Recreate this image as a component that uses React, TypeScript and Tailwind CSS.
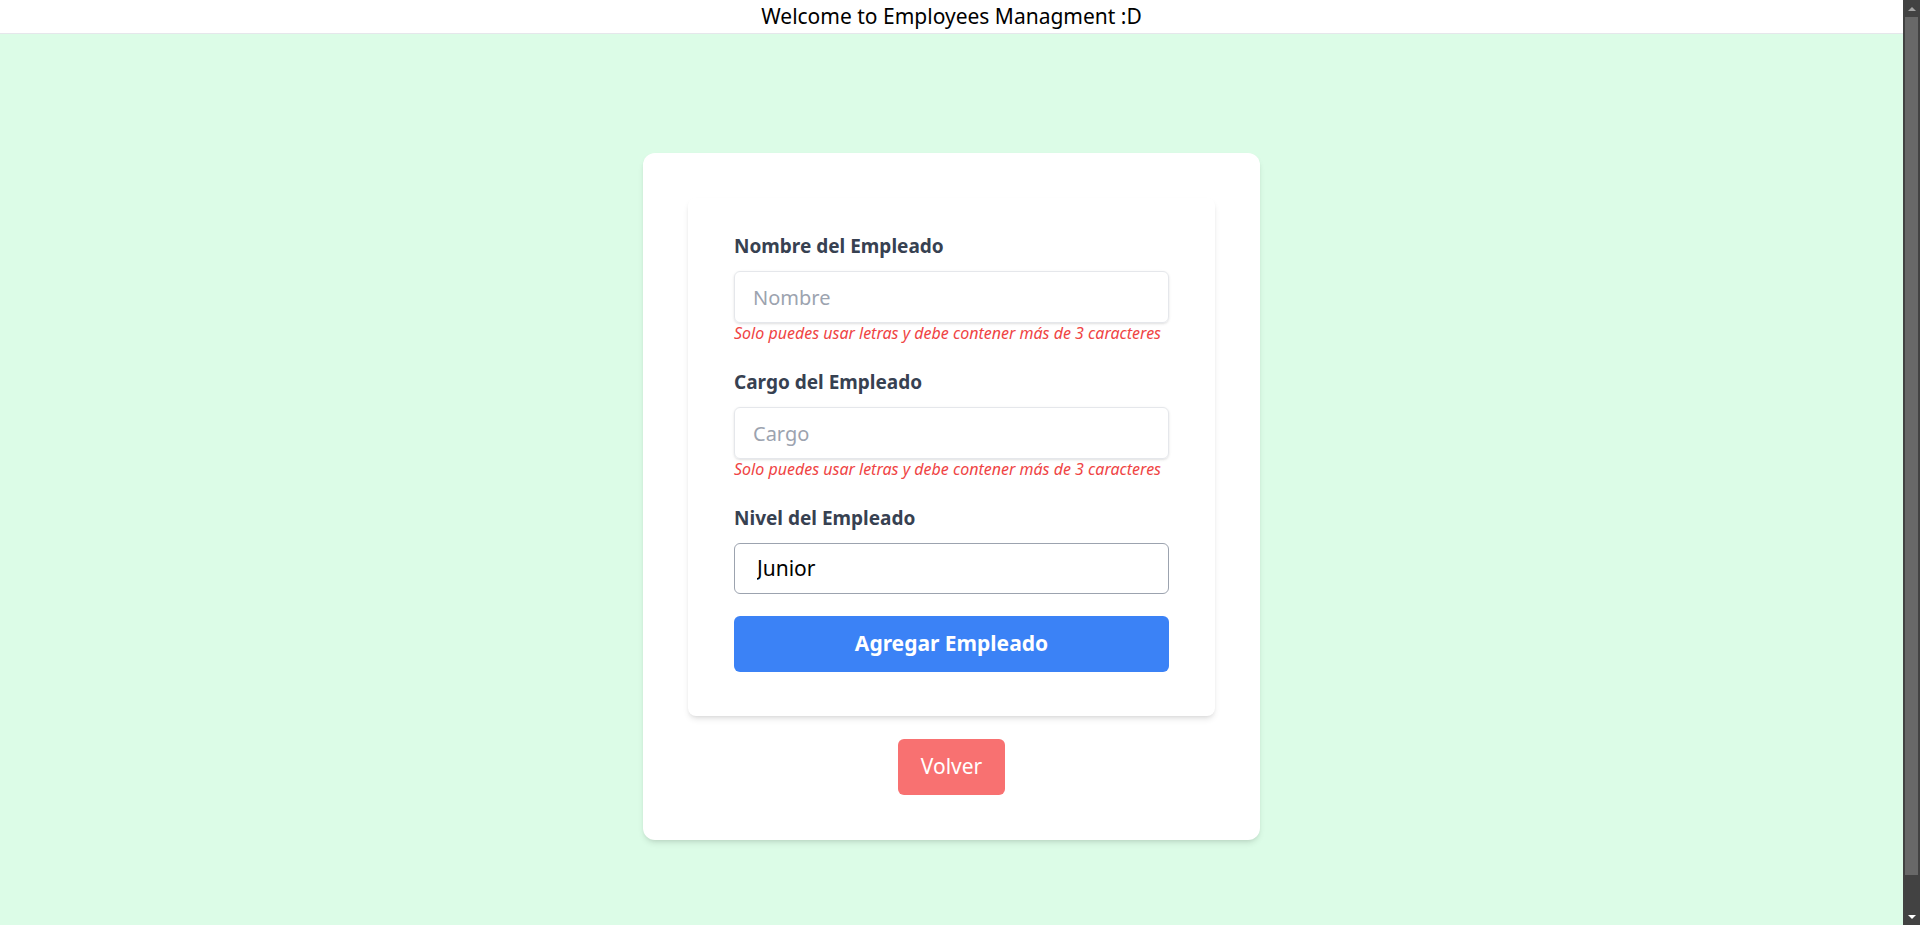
import { useState } from 'react';

const labelCls = 'mb-[12px] block text-[19px] leading-[25px] font-bold text-[#374151]';
const inputCls =
  'h-[52px] w-full rounded-md border border-[#e5e7eb] px-[18px] text-[20px] text-[#374151] shadow placeholder:text-[#9ca3af] focus:outline-none';
const errorCls = 'text-[16px] leading-[20px] text-[#ef4444] italic';

function ScrollBar() {
  return (
    <div className="flex h-screen w-[17px] shrink-0 flex-col bg-[#424242]">
      <div className="flex h-[17px] items-center justify-center">
        <div className="h-0 w-0 border-x-[4px] border-b-[4px] border-x-transparent border-b-[#a3a3a3]" />
      </div>
      <div className="mx-[2px] flex-1 bg-[#686868]" />
      <div className="h-[33px]" />
      <div className="flex h-[17px] items-center justify-center">
        <div className="h-0 w-0 border-x-[4px] border-t-[4px] border-x-transparent border-t-white" />
      </div>
    </div>
  );
}

export default function App() {
  const [nombre, setNombre] = useState('');
  const [cargo, setCargo] = useState('');
  const [nivel, setNivel] = useState('Junior');

  return (
    <div className="flex h-screen font-['Noto_Sans',sans-serif]">
      <div className="flex-1 overflow-y-auto">
        <header className="h-[34px] border-b border-[#e5e7eb] bg-white text-center text-[21px] leading-[33px] text-black">
          Welcome to Employees Managment :D
        </header>

        <main className="flex min-h-screen items-center justify-center bg-[#dcfce7]">
          <div className="w-[617px] rounded-xl bg-white p-[45px] shadow-md">
            <form
              className="rounded-lg bg-white px-[46px] pt-[36px] pb-[44px] shadow-md"
              onSubmit={(e) => e.preventDefault()}
            >
              <div className="mb-[27px]">
                <label className={labelCls}>Nombre del Empleado</label>
                <input
                  type="text"
                  value={nombre}
                  onChange={(e) => setNombre(e.target.value)}
                  placeholder="Nombre"
                  className={inputCls}
                />
                <p className={errorCls}>Solo puedes usar letras y debe contener más de 3 caracteres</p>
              </div>

              <div className="mb-[27px]">
                <label className={labelCls}>Cargo del Empleado</label>
                <input
                  type="text"
                  value={cargo}
                  onChange={(e) => setCargo(e.target.value)}
                  placeholder="Cargo"
                  className={inputCls}
                />
                <p className={errorCls}>Solo puedes usar letras y debe contener más de 3 caracteres</p>
              </div>

              <div className="mb-[22px]">
                <label className={labelCls}>Nivel del Empleado</label>
                <select
                  value={nivel}
                  onChange={(e) => setNivel(e.target.value)}
                  className="h-[51px] w-full appearance-none rounded-md border border-[#9ca3af] bg-white px-[22px] text-[21px] text-black focus:outline-none"
                >
                  <option>Junior</option>
                  <option>Semi-Senior</option>
                  <option>Senior</option>
                </select>
              </div>

              <button
                type="submit"
                className="h-[56px] w-full rounded-md bg-[#3b82f6] text-[21px] font-bold text-white hover:bg-[#2563eb]"
              >
                Agregar Empleado
              </button>
            </form>

            <div className="mt-[23px] flex justify-center">
              <button className="h-[56px] w-[107px] rounded-md bg-[#f87171] text-[21px] text-white hover:bg-[#ef4444]">
                Volver
              </button>
            </div>
          </div>
        </main>
      </div>
      <ScrollBar />
    </div>
  );
}
